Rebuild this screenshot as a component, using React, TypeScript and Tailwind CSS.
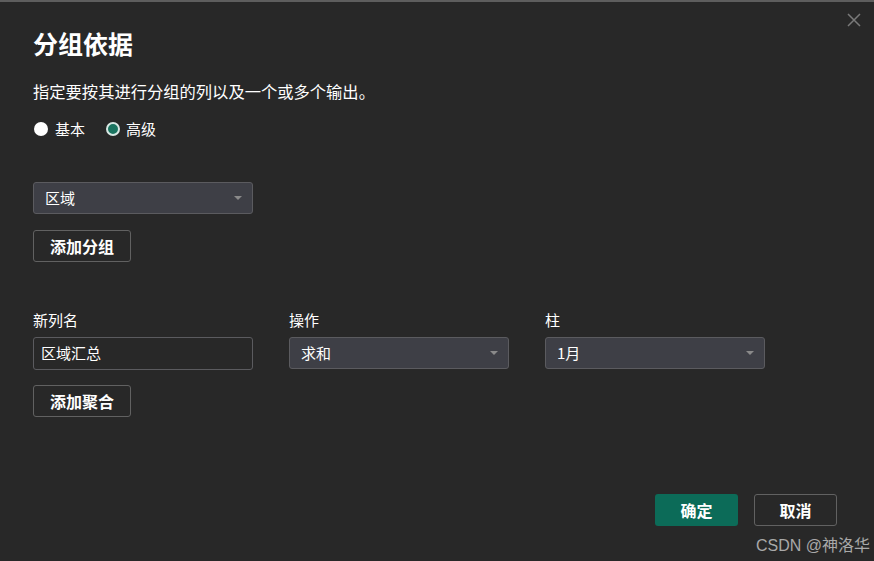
import React from "react";

const font = { fontFamily: '"Noto Sans CJK SC", "Noto Sans", sans-serif' };

function Caret() {
  return (
    <svg width="10" height="6" viewBox="0 0 10 6" className="shrink-0">
      <path d="M1 1 L9 1 L5 5 Z" fill="#8a8a8a" />
    </svg>
  );
}

function Select({ value }: { value: string }) {
  return (
    <div className="flex h-[32px] w-[220px] items-center justify-between rounded-[3px] border border-[#5b5b5f] bg-[#3e3f46] pl-[11px] pr-[9px] text-[15px] text-white">
      <span>{value}</span>
      <Caret />
    </div>
  );
}

function OutlineButton({ label }: { label: string }) {
  return (
    <div className="flex h-[32px] w-[98px] items-center justify-center rounded-[3px] border border-[#616161] text-[16px] font-bold text-white">
      {label}
    </div>
  );
}

export default function App() {
  return (
    <div
      style={font}
      className="relative h-[561px] w-[874px] overflow-hidden border-t-2 border-[#5e5e5e] bg-[#282828] text-white"
    >
      <svg
        className="absolute right-[12px] top-[10px]"
        width="16"
        height="16"
        viewBox="0 0 16 16"
      >
        <path d="M2 2 L14 14 M14 2 L2 14" stroke="#7a7a7a" strokeWidth="1.5" />
      </svg>

      <div className="flex flex-col pl-[33px]">
        <div className="mt-[25px] h-[32px] text-[25px] font-bold leading-[32px]">分组依据</div>
        <div className="mt-[21px] h-[22px] text-[16.3px] leading-[22px]">
          指定要按其进行分组的列以及一个或多个输出。
        </div>
        <div className="mt-[16px] flex h-[22px] items-center text-[15px]">
          <span className="ml-[1px] h-[14px] w-[14px] rounded-full bg-white" />
          <span className="ml-[7px]">基本</span>
          <span className="ml-[21px] flex h-[14px] w-[14px] items-center justify-center rounded-full border-2 border-[#d8e8e4] bg-[#1a7460]">
          </span>
          <span className="ml-[6px]">高级</span>
        </div>

        <div className="mt-[42px]">
          <Select value="区域" />
        </div>
        <div className="mt-[16px]">
          <OutlineButton label="添加分组" />
        </div>

        <div className="mt-[48px] flex gap-[36px]">
          <div className="flex w-[220px] flex-col">
            <div className="h-[20px] text-[15px] leading-[20px]">新列名</div>
            <div className="mt-[7px] flex h-[33px] items-center rounded-[3px] border border-[#5b5b5f] bg-[#282828] pl-[7px] text-[15px]">
              区域汇总
            </div>
          </div>
          <div className="flex w-[220px] flex-col">
            <div className="h-[20px] text-[15px] leading-[20px]">操作</div>
            <div className="mt-[7px]">
              <Select value="求和" />
            </div>
          </div>
          <div className="flex w-[220px] flex-col">
            <div className="h-[20px] text-[15px] leading-[20px]">柱</div>
            <div className="mt-[7px]">
              <Select value="1月" />
            </div>
          </div>
        </div>
        <div className="mt-[15px]">
          <OutlineButton label="添加聚合" />
        </div>
      </div>

      <div className="absolute right-[37px] top-[492px] flex gap-[16px]">
        <div className="flex h-[32px] w-[83px] items-center justify-center rounded-[3px] bg-[#0c6b58] text-[16px] font-bold">
          确定
        </div>
        <div className="flex h-[32px] w-[83px] items-center justify-center rounded-[3px] border border-[#616161] text-[16px] font-bold">
          取消
        </div>
      </div>
      <div
        className="absolute right-[4px] top-[532px] text-[16px] text-[#a9a9a9]"
        style={{ fontFamily: '"Liberation Sans", "Noto Sans CJK SC", sans-serif' }}
      >
        CSDN @神洛华
      </div>
    </div>
  );
}
